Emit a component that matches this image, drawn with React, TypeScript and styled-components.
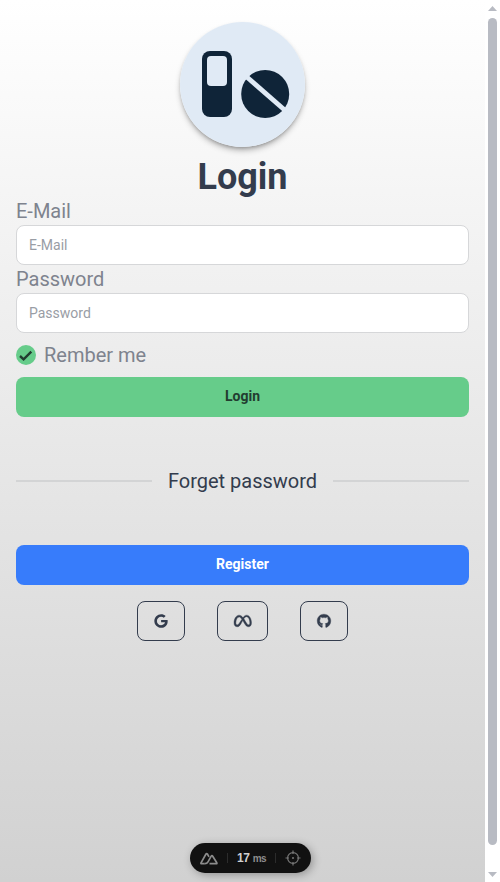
import React from 'react';
import styled, { createGlobalStyle } from 'styled-components';
import { FaGoogle, FaMeta, FaGithub } from 'react-icons/fa6';

const GlobalStyle = createGlobalStyle`
  *, *::before, *::after { box-sizing: border-box; }
  html, body { margin: 0; padding: 0; overflow: hidden; }
  body { font-family: Roboto, sans-serif; color: #333c4d; background: #fff; }
  h1 { margin: 0; }
`;

const Window = styled.div`
  display: flex;
  height: 882px;
  background: #fff;
`;

const Page = styled.main`
  position: relative;
  width: 485px;
  height: 882px;
  padding: 22px 16px 0;
  display: flex;
  flex-direction: column;
  background: linear-gradient(to bottom, #fff, #d1d1d1);
`;

const Logo = styled.svg`
  display: block;
  flex: none;
  width: 125px;
  height: 125px;
  margin: 0 auto 10px;
  border-radius: 50%;
  box-shadow: 0 4px 6px -1px rgba(0, 0, 0, 0.3), 0 2px 4px -2px rgba(0, 0, 0, 0.3);
`;

const Title = styled.h1`
  font-size: 36px;
  line-height: 40px;
  font-weight: 700;
  text-align: center;
`;

const Field = styled.label`
  display: block;
  font-size: 20px;
  line-height: 28px;
  color: #7e838e;
`;

const Input = styled.input`
  display: block;
  width: 100%;
  height: 40px;
  padding: 0 12px;
  border: 1px solid #d6d7d9;
  border-radius: 8px;
  background: #fff;
  outline: none;
  font: 14px/20px Roboto, sans-serif;
  color: #333c4d;
  &::placeholder { color: #999da5; opacity: 1; }
`;

const Remember = styled.label`
  display: flex;
  align-items: center;
  gap: 8px;
  height: 28px;
  margin: 8px 0;
  font-size: 20px;
  color: #7e838e;
`;

const Check = styled.svg`
  width: 20px;
  height: 20px;
`;

const Button = styled.button<{ $tone: 'primary' | 'secondary' }>`
  flex: none;
  height: 40px;
  padding: 0 0 2px;
  border: 0;
  border-radius: 8px;
  font: 700 14px/20px Roboto, sans-serif;
  color: ${({ $tone }) => ($tone === 'primary' ? '#223d30' : '#fff')};
  background: ${({ $tone }) => ($tone === 'primary' ? '#66cc8a' : '#377cfb')};
`;

const Divider = styled.div`
  display: flex;
  align-items: center;
  gap: 16px;
  height: 28px;
  margin: 50px 0;
  font-size: 20px;
  line-height: 28px;
  white-space: nowrap;
  &::before, &::after {
    content: '';
    flex: 1;
    height: 2px;
    background: #d3d4d5;
  }
`;

const Socials = styled.div`
  display: flex;
  justify-content: center;
  gap: 32px;
  margin-top: 16px;
`;

const SocialButton = styled.button<{ $iconWidth?: number; $weight?: number }>`
  display: flex;
  align-items: center;
  justify-content: center;
  height: 40px;
  padding: 0 16px;
  border: 1px solid #333c4d;
  border-radius: 8px;
  background: transparent;
  color: #333c4d;
  svg {
    display: block;
    height: 14px;
    width: ${({ $iconWidth = 14 }) => $iconWidth}px;
    overflow: visible;
    stroke-width: ${({ $weight = 0 }) => $weight};
  }
`;

const DevPill = styled.div`
  position: absolute;
  left: 190px;
  bottom: 9px;
  width: 121px;
  height: 30px;
  padding: 0 10px;
  display: flex;
  align-items: center;
  justify-content: space-between;
  border-radius: 15px;
  background: #111;
  box-shadow: 2px 2px 8px rgba(0, 0, 0, 0.3);
  font: 500 12px "Liberation Sans", sans-serif;
  color: #d0d0d0;
`;

const PillRule = styled.i`
  width: 1px;
  height: 10px;
  background: #2c2c2c;
`;

const Timing = styled.span`
  display: flex;
  align-items: baseline;
  gap: 3px;
  font-weight: 700;
  letter-spacing: -0.3px;
  small { font-size: 10px; font-weight: 700; letter-spacing: -0.6px; color: #8d8d8d; }
`;

const PillIcon = styled.svg`
  display: block;
  flex: none;
`;

const ScrollTrack = styled.aside`
  width: 15px;
  height: 882px;
  padding: 6px 3px 5px;
  display: flex;
  flex-direction: column;
  align-items: center;
`;

const Arrow = styled.svg`
  display: block;
  flex: none;
  width: 9px;
  height: 5px;
`;

const Thumb = styled.div`
  width: 9px;
  height: 827px;
  margin: 7px 0 auto;
  border-radius: 5px;
  background: #b8bbc3;
`;

export default function App() {
  return (
    <>
      <GlobalStyle />
      <Window>
        <Page>
          <Logo viewBox="0 0 125 125">
            <rect width="125" height="125" fill="#e0eaf5" />
            <rect x="22" y="29" width="30" height="66" rx="8" fill="#0f2438" />
            <rect x="27" y="34" width="20" height="30" rx="4" fill="#e0eaf5" />
            <circle cx="85.2" cy="72" r="24" fill="#0f2438" />
            <path d="M64.5 53 L107.5 90.5" stroke="#e0eaf5" strokeWidth="4.8" />
          </Logo>
          <Title>Login</Title>
          <Field htmlFor="email">E-Mail</Field>
          <Input id="email" type="email" placeholder="E-Mail" />
          <Field htmlFor="password">Password</Field>
          <Input id="password" type="password" placeholder="Password" />
          <Remember>
            <Check viewBox="0 0 20 20">
              <circle cx="10" cy="10" r="10" fill="#66cc8a" />
              <path d="M4 11 L7.6 14.3 L15.3 6.7" fill="none" stroke="#223d30" strokeWidth="2.4" />
            </Check>
            Rember me
          </Remember>
          <Button $tone="primary">Login</Button>
          <Divider>Forget password</Divider>
          <Button $tone="secondary">Register</Button>
          <Socials>
            <SocialButton aria-label="Google"><FaGoogle /></SocialButton>
            <SocialButton aria-label="Meta" $iconWidth={17.5} $weight={14}><FaMeta /></SocialButton>
            <SocialButton aria-label="GitHub" $weight={14}><FaGithub /></SocialButton>
          </Socials>
          <DevPill>
            <PillIcon width="18" height="13" viewBox="0 0 18 13" fill="none" stroke="#8c8c8c" strokeWidth="1.7" strokeLinejoin="round">
              <path d="M4.8 11.7 H1.6 Q.6 11.7 1 10.8 L6 2 Q6.7 1 7.4 2 L9 4.8" />
              <path d="M4.8 11.7 Q7 11.7 8 9.8 L11.2 4.2 Q12 3.1 12.7 4.2 L16.8 10.8 Q17.2 11.7 16.3 11.7 H9.5" />
            </PillIcon>
            <PillRule />
            <Timing>17 <small>ms</small></Timing>
            <PillRule />
            <PillIcon width="16" height="16" viewBox="0 0 16 16" fill="none" stroke="#777" strokeWidth="1.2">
              <circle cx="8" cy="8" r="5.4" />
              <path d="M8 .5 V4 M8 12 V15.5 M.5 8 H4 M12 8 H15.5" />
              <circle cx="8" cy="8" r="1" fill="#777" stroke="none" />
            </PillIcon>
          </DevPill>
        </Page>
        <ScrollTrack>
          <Arrow viewBox="0 0 9 5"><path d="M0 5 L4.5 0 L9 5Z" fill="#b8bbc3" /></Arrow>
          <Thumb />
          <Arrow viewBox="0 0 9 5"><path d="M0 0 L4.5 5 L9 0Z" fill="#b8bbc3" /></Arrow>
        </ScrollTrack>
      </Window>
    </>
  );
}
